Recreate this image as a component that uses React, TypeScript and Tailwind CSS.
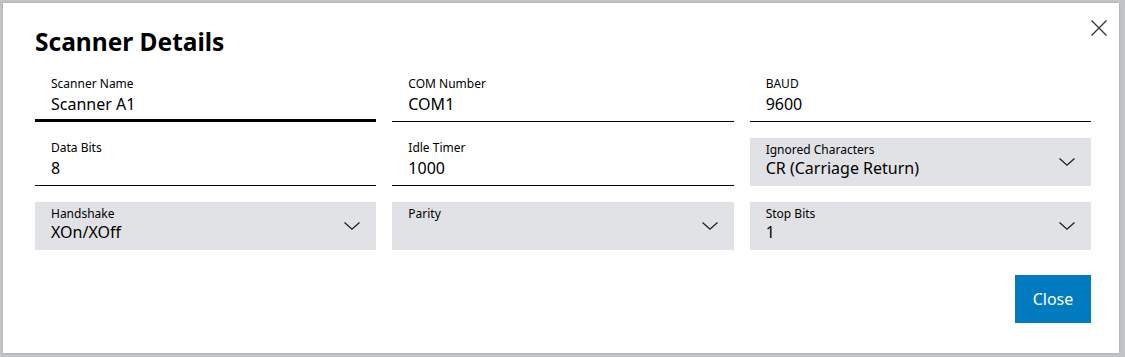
import React from "react";

type Field = {
  label: string;
  value?: string;
  kind: "text" | "select";
  focused?: boolean;
};

const fields: Field[] = [
  { label: "Scanner Name", value: "Scanner A1", kind: "text", focused: true },
  { label: "COM Number", value: "COM1", kind: "text" },
  { label: "BAUD", value: "9600", kind: "text" },
  { label: "Data Bits", value: "8", kind: "text" },
  { label: "Idle Timer", value: "1000", kind: "text" },
  { label: "Ignored Characters", value: "CR (Carriage Return)", kind: "select" },
  { label: "Handshake", value: "XOn/XOff", kind: "select" },
  { label: "Parity", kind: "select" },
  { label: "Stop Bits", value: "1", kind: "select" },
];

function Chevron() {
  return (
    <svg width="16" height="8" viewBox="0 0 16 8" fill="none" className="shrink-0">
      <path d="M0.5 0.5 L8 7.2 L15.5 0.5" stroke="#1a1a1a" strokeWidth="1.2" />
    </svg>
  );
}

function TextField({ field }: { field: Field }) {
  return (
    <div
      className={
        field.focused
          ? "h-12 flex flex-col px-4 pt-[2px] border-b-[3px] border-black"
          : "h-12 flex flex-col px-4 pt-[2px] border-b border-black"
      }
    >
      <span className="text-xs leading-4 text-black">{field.label}</span>
      <span className="text-base leading-6 text-black">{field.value}</span>
    </div>
  );
}

function SelectField({ field }: { field: Field }) {
  return (
    <div className="h-12 flex items-center bg-[#e0e2e5] pl-4 pr-4">
      <div className="flex-1 flex flex-col self-start pt-[4px]">
        <span className="text-xs leading-4 text-black">{field.label}</span>
        {field.value && <span className="text-base leading-5 text-black">{field.value}</span>}
      </div>
      <Chevron />
    </div>
  );
}

export default function App() {
  return (
    <div
      className="w-[1125px] h-[357px] bg-[#c3c4c5] pl-[3px] pr-[6px] pt-[3px] pb-[4px]"
      style={{ fontFamily: '"Noto Sans", Arial, sans-serif' }}
    >
      <div className="relative h-full bg-white pl-8 pr-[28px] pt-[23px] shadow-[0_0_2px_rgba(0,0,0,0.2)]">
        <button className="absolute top-[17px] right-[12px] w-4 h-4">
          <svg width="16" height="16" viewBox="0 0 16 16" fill="none">
            <path d="M0.5 0.5 L15.5 15.5 M15.5 0.5 L0.5 15.5" stroke="#333" strokeWidth="1.3" />
          </svg>
        </button>

        <h1 className="text-[24.5px] leading-8 font-bold text-black">Scanner Details</h1>

        <div className="mt-4 grid grid-cols-3 gap-4">
          {fields.map((f) =>
            f.kind === "text" ? <TextField key={f.label} field={f} /> : <SelectField key={f.label} field={f} />
          )}
        </div>

        <div className="mt-[25px] flex justify-end">
          <button className="h-12 w-[76px] flex items-center justify-center bg-[#007bc0] text-white text-base">
            Close
          </button>
        </div>
      </div>
    </div>
  );
}
